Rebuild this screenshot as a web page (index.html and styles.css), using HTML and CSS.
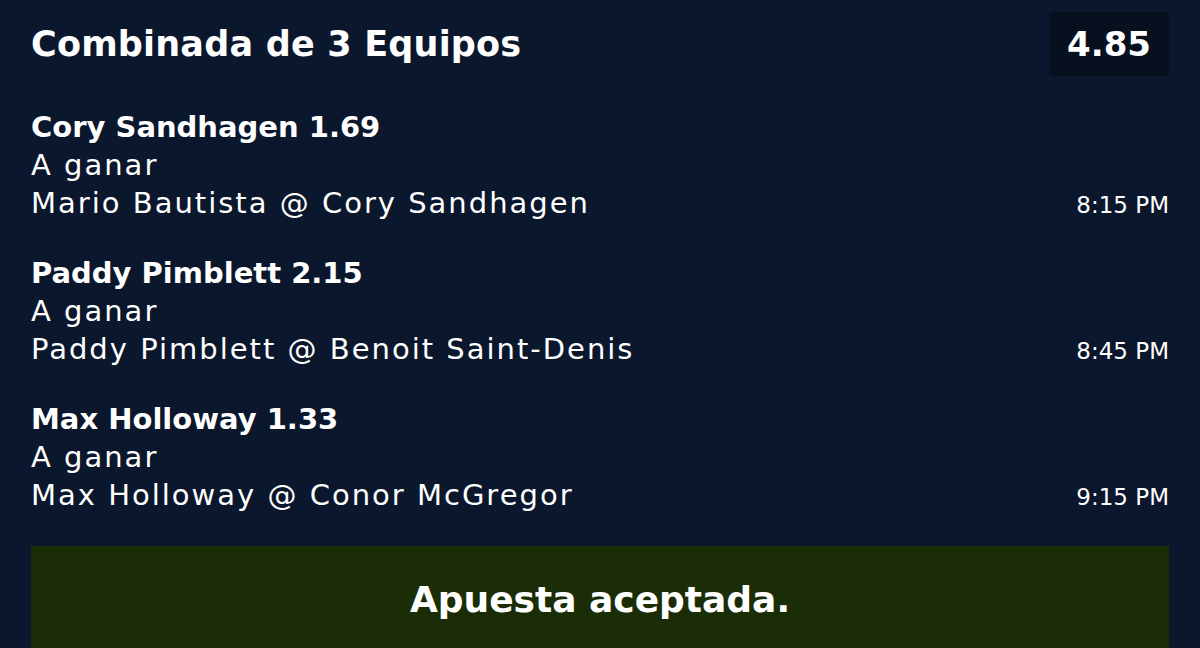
FILE: index.html
```html
<!DOCTYPE html>
<html lang="es">
<head>
  <meta charset="UTF-8" />
  <title>Combinada de 3 Equipos</title>
  <link rel="stylesheet" href="styles.css">
</head>
<body>
  <div class="ticket">
    <div class="ticket-head">
      <h1 class="title">Combinada de 3 Equipos</h1>
      <div class="odds">4.85</div>
    </div>

    <div class="leg">
      <div class="pick">Cory Sandhagen 1.69</div>
      <div class="market">A ganar</div>
      <div class="event">
        <span>Mario Bautista @ Cory Sandhagen</span>
        <span class="time">8:15 PM</span>
      </div>
    </div>

    <div class="leg">
      <div class="pick">Paddy Pimblett 2.15</div>
      <div class="market">A ganar</div>
      <div class="event">
        <span>Paddy Pimblett @ Benoit Saint-Denis</span>
        <span class="time">8:45 PM</span>
      </div>
    </div>

    <div class="leg">
      <div class="pick">Max Holloway 1.33</div>
      <div class="market">A ganar</div>
      <div class="event">
        <span>Max Holloway @ Conor McGregor</span>
        <span class="time">9:15 PM</span>
      </div>
    </div>

    <div class="status">Apuesta aceptada.</div>
  </div>
</body>
</html>
```

FILE: styles.css
```css
body {
  margin: 0;
  background-color: #0b172d;
  color: #fff;
  font-family: "DejaVu Sans", "Open Sans", sans-serif;
  overflow: hidden;
}

.ticket {
  padding: 12px 31px 0 31px;
}

.ticket-head {
  display: flex;
  justify-content: space-between;
  align-items: center;
  margin-bottom: 32px;
}

.title {
  margin: 0;
  font-size: 35px;
  font-weight: 600;
  letter-spacing: 0.2px;
}

.odds {
  background-color: #07101f;
  border-radius: 4px;
  padding: 0 18px;
  height: 64px;
  line-height: 64px;
  font-size: 34px;
  font-weight: 600;
}

.leg {
  margin-bottom: 30px;
  font-size: 29px;
  line-height: 38px;
  letter-spacing: 2px;
}

.pick {
  font-weight: 700;
  letter-spacing: 0;
}

.event {
  display: flex;
  justify-content: space-between;
  align-items: baseline;
}

.time {
  font-size: 23px;
  letter-spacing: 0;
}

.status {
  background-color: #1b2d06;
  margin-top: 3px;
  height: 106px;
  display: flex;
  align-items: center;
  justify-content: center;
  font-size: 36px;
  font-weight: 700;
}
```
